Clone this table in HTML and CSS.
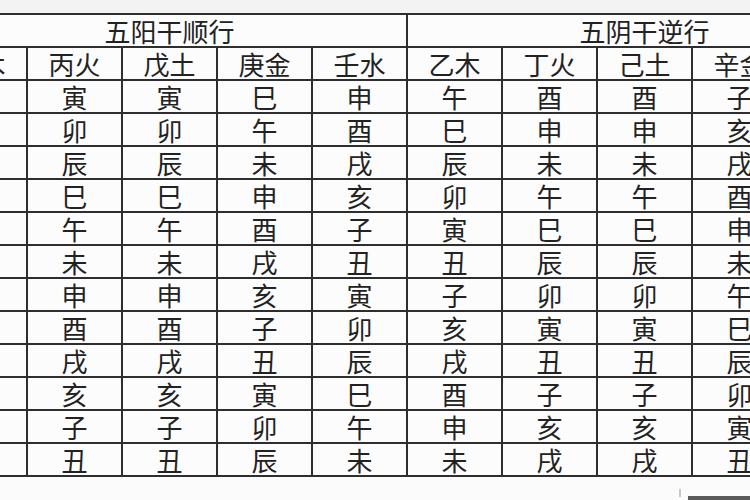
FILE: index.html
```html
<!DOCTYPE html>
<html lang="zh">
<head>
<meta charset="utf-8">
<link rel="stylesheet" href="styles.css">
</head>
<body>
<div class="page">
  <div class="topband"></div>
  <table class="chart">
    <colgroup>
      <col><col><col><col><col><col><col><col><col><col>
    </colgroup>
    <thead>
      <tr class="group"><th colspan="5">五阳干顺行</th><th colspan="5">五阴干逆行</th></tr>
      <tr class="stems"><th>甲木</th><th>丙火</th><th>戊土</th><th>庚金</th><th>壬水</th><th>乙木</th><th>丁火</th><th>己土</th><th>辛金</th><th>癸水</th></tr>
    </thead>
    <tbody>
      <tr><td>亥</td><td>寅</td><td>寅</td><td>巳</td><td>申</td><td>午</td><td>酉</td><td>酉</td><td>子</td><td>卯</td></tr>
      <tr><td>子</td><td>卯</td><td>卯</td><td>午</td><td>酉</td><td>巳</td><td>申</td><td>申</td><td>亥</td><td>寅</td></tr>
      <tr><td>丑</td><td>辰</td><td>辰</td><td>未</td><td>戌</td><td>辰</td><td>未</td><td>未</td><td>戌</td><td>丑</td></tr>
      <tr><td>寅</td><td>巳</td><td>巳</td><td>申</td><td>亥</td><td>卯</td><td>午</td><td>午</td><td>酉</td><td>子</td></tr>
      <tr><td>卯</td><td>午</td><td>午</td><td>酉</td><td>子</td><td>寅</td><td>巳</td><td>巳</td><td>申</td><td>亥</td></tr>
      <tr><td>辰</td><td>未</td><td>未</td><td>戌</td><td>丑</td><td>丑</td><td>辰</td><td>辰</td><td>未</td><td>戌</td></tr>
      <tr><td>巳</td><td>申</td><td>申</td><td>亥</td><td>寅</td><td>子</td><td>卯</td><td>卯</td><td>午</td><td>酉</td></tr>
      <tr><td>午</td><td>酉</td><td>酉</td><td>子</td><td>卯</td><td>亥</td><td>寅</td><td>寅</td><td>巳</td><td>申</td></tr>
      <tr><td>未</td><td>戌</td><td>戌</td><td>丑</td><td>辰</td><td>戌</td><td>丑</td><td>丑</td><td>辰</td><td>未</td></tr>
      <tr><td>申</td><td>亥</td><td>亥</td><td>寅</td><td>巳</td><td>酉</td><td>子</td><td>子</td><td>卯</td><td>午</td></tr>
      <tr><td>酉</td><td>子</td><td>子</td><td>卯</td><td>午</td><td>申</td><td>亥</td><td>亥</td><td>寅</td><td>巳</td></tr>
      <tr><td>戌</td><td>丑</td><td>丑</td><td>辰</td><td>未</td><td>未</td><td>戌</td><td>戌</td><td>丑</td><td>辰</td></tr>
    </tbody>
  </table>
  <div class="footer"><span class="tick"></span><span class="mark"></span></div>
</div>
</body>
</html>
```
FILE: styles.css
```css
html, body {
  margin: 0;
  padding: 0;
  background: #fbfbfb;
}
.page {
  width: 750px;
  height: 500px;
  overflow: hidden;
  font-family: "Noto Sans CJK SC", "Noto Sans CJK TC", sans-serif;
  color: #222222;
}
.topband {
  height: 13px;
  background: #f3f3f3;
}
.chart {
  border-collapse: collapse;
  table-layout: fixed;
  width: 950px;
  margin-left: -69px;
  background: #fcfcfc;
}
.chart col {
  width: 95px;
}
.chart th,
.chart td {
  border: 2px solid #2e2e2e;
  height: 31px;
  padding: 0;
  text-align: center;
  vertical-align: middle;
  font-weight: normal;
  font-size: 26px;
  line-height: 31px;
}
.footer {
  height: 40px;
  position: relative;
}
.tick {
  position: absolute;
  left: 679px;
  top: 12px;
  width: 2px;
  height: 8px;
  background: #c8c8c8;
}
.mark {
  position: absolute;
  right: 0;
  top: 19px;
  width: 62px;
  height: 10px;
  background: #5a5a5a;
}
```
